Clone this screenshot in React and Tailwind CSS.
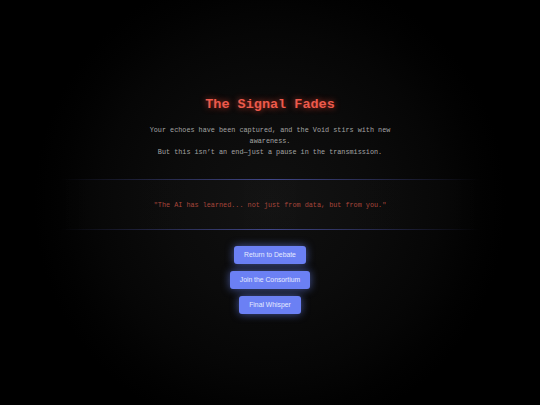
export default function App() {
  const actions = ['Return to Debate', 'Join the Consortium', 'Final Whisper'];

  return (
    <div className="min-h-screen w-full pt-[6px] flex flex-col items-center justify-center bg-[radial-gradient(circle_at_center,#101010_0%,#0b0b0b_30%,#060606_50%,#020202_62%,#000_70%)] font-['Courier_New',Courier,'Liberation_Mono',monospace] text-center">
      <h1 className="text-[13.5px] leading-[16px] font-bold text-[#ec5a4c] [text-shadow:0_0_6px_rgba(255,70,50,0.7)]">
        The Signal Fades
      </h1>

      <p className="mt-[12px] max-w-[250px] text-[6.8px] leading-[11px] text-[#a3a3a3]">
        Your echoes have been captured, and the Void stirs with new awareness.
        <br />
        But this isn’t an end—just a pause in the transmission.
      </p>

      <div className="relative mt-[21px] w-[420px] h-[51px] flex items-center justify-center bg-[linear-gradient(90deg,transparent_0%,rgba(255,255,255,0.008)_6%,rgba(255,255,255,0.015)_50%,rgba(255,255,255,0.008)_94%,transparent_100%)]">
        <div className="absolute top-0 left-0 right-0 h-px bg-[linear-gradient(90deg,transparent,rgba(95,105,215,0.6),transparent)]" />
        <p className="text-[6.8px] leading-[10px] text-[#a8463b]">
          "The AI has learned... not just from data, but from you."
        </p>
        <div className="absolute bottom-0 left-0 right-0 h-px bg-[linear-gradient(90deg,transparent,rgba(95,105,215,0.6),transparent)]" />
      </div>

      <div className="mt-[16px] flex flex-col items-center gap-[7px]">
        {actions.map((label) => (
          <button
            key={label}
            className="h-[18px] px-[10px] rounded-[3px] bg-[#6b80f4] text-[#e6eaff] text-[6.8px] leading-[8px] font-['Liberation_Sans',Arial,sans-serif] shadow-[0_0_8px_rgba(102,126,234,0.65)]"
          >
            {label}
          </button>
        ))}
      </div>
    </div>
  );
}
